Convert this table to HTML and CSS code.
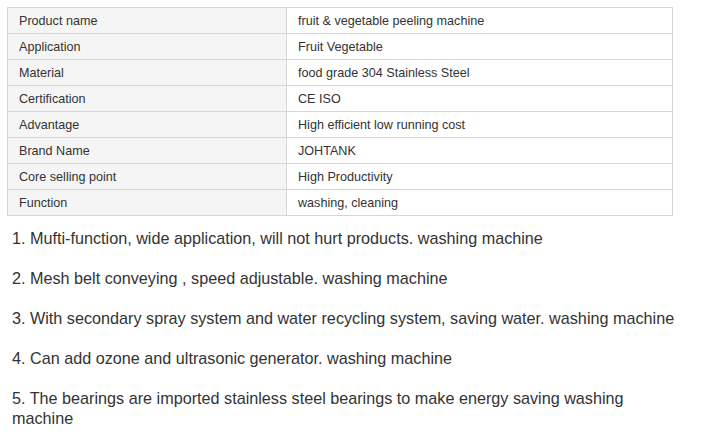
FILE: index.html
```html
<!DOCTYPE html>
<html>
<head>
<meta charset="utf-8">
<link rel="stylesheet" href="styles.css">
</head>
<body>
<div class="page">
<table class="spec">
<tr><td class="k">Product name</td><td class="v">fruit &amp; vegetable peeling machine</td></tr>
<tr><td class="k">Application</td><td class="v">Fruit Vegetable</td></tr>
<tr><td class="k">Material</td><td class="v">food grade 304 Stainless Steel</td></tr>
<tr><td class="k">Certification</td><td class="v">CE ISO</td></tr>
<tr><td class="k">Advantage</td><td class="v">High efficient low running cost</td></tr>
<tr><td class="k">Brand Name</td><td class="v">JOHTANK</td></tr>
<tr><td class="k">Core selling point</td><td class="v">High Productivity</td></tr>
<tr><td class="k">Function</td><td class="v">washing, cleaning</td></tr>
</table>
<div class="desc">
<p>1. Mufti-function, wide application, will not hurt products. washing machine</p>
<p>2. Mesh belt conveying , speed adjustable. washing machine</p>
<p>3. With secondary spray system and water recycling system, saving water. washing machine</p>
<p>4. Can add ozone and ultrasonic generator. washing machine</p>
<p>5. The bearings are imported stainless steel bearings to make energy saving washing machine</p>
</div>
</div>
</body>
</html>
```

FILE: styles.css
```css
html, body {
  margin: 0;
  padding: 0;
  background: #fff;
}
.page {
  padding: 7px 0 0 7px;
  font-family: "Liberation Sans", Arial, sans-serif;
  color: #333;
}
.spec {
  border-collapse: collapse;
  width: 666px;
  font-size: 12.6px;
}
.spec td {
  border: 1px solid #d6d6d6;
  height: 26px;
  padding: 0 0 0 11px;
  box-sizing: border-box;
  line-height: 14px;
  vertical-align: middle;
}
.spec .k {
  width: 279px;
  background: #f5f5f5;
  color: #333;
}
.spec .v {
  background: #fff;
}
.desc {
  padding: 12px 0 0 5px;
  width: 670px;
  font-size: 16.2px;
  line-height: 20px;
  color: #333;
}
.desc p {
  margin: 0 0 20px 0;
}
```
